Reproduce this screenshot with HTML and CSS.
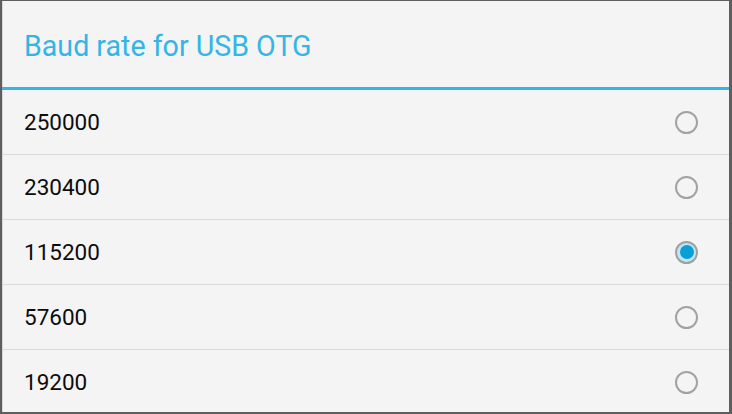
FILE: index.html
```html
<!DOCTYPE html>
<html>
<head>
<meta charset="utf-8">
<link rel="stylesheet" href="styles.css">
</head>
<body>
<div class="dialog">
  <div class="title">Baud rate for USB OTG</div>
  <div class="divider"></div>
  <ul class="list">
    <li class="row"><span class="label">250000</span><span class="radio"></span></li>
    <li class="row"><span class="label">230400</span><span class="radio"></span></li>
    <li class="row"><span class="label">115200</span><span class="radio checked"></span></li>
    <li class="row"><span class="label">57600</span><span class="radio"></span></li>
    <li class="row"><span class="label">19200</span><span class="radio"></span></li>
  </ul>
</div>
</body>
</html>
```
FILE: styles.css
```css
html, body {
  margin: 0;
  height: 100%;
}
body {
  background: #5e5e5e;
  padding: 1px 3px 2px 2px;
  box-sizing: border-box;
  font-family: Roboto, "Noto Sans", sans-serif;
}
.dialog {
  height: 411px;
  background: #f4f4f4;
  overflow: hidden;
  box-shadow: inset 1px 0 0 #d8d8d8;
}
.title {
  height: 86px;
  box-sizing: border-box;
  padding-left: 22px;
  display: flex;
  align-items: center;
  color: #33b5e5;
  font-size: 28.6px;
  padding-top: 4px;
}
.divider {
  height: 3px;
  background: #33b5e5;
}
.list {
  list-style: none;
  margin: 0;
  padding: 0;
}
.row {
  height: 64px;
  display: flex;
  align-items: center;
  justify-content: space-between;
  padding: 0 31px 0 22px;
  border-top: 1px solid #dadada;
  font-size: 22.5px;
  color: #0c0c0c;
}
.row:first-child {
  border-top: none;
}
.radio {
  width: 23px;
  height: 23px;
  box-sizing: border-box;
  border: 2px solid #a2a2a2;
  border-radius: 50%;
  position: relative;
}
.radio.checked {
  border-color: #a0a0a0;
  background: #bfe6f5;
}
.radio.checked::after {
  content: "";
  position: absolute;
  left: 2.5px;
  top: 2.5px;
  width: 14px;
  height: 14px;
  border-radius: 50%;
  background: #0c9ed6;
}
```
